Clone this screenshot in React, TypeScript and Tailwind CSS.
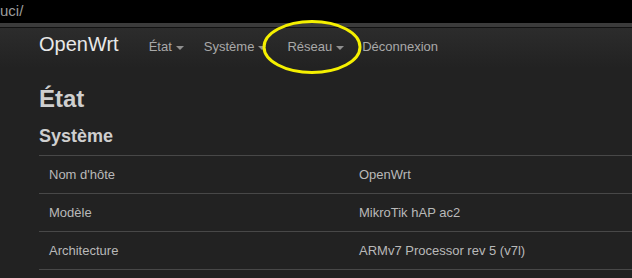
const rows = [
  ['Nom d\'hôte', 'OpenWrt'],
  ['Modèle', 'MikroTik hAP ac2'],
  ['Architecture', 'ARMv7 Processor rev 5 (v7l)'],
]

function Caret() {
  return (
    <span className="ml-[4px] inline-block h-0 w-0 border-x-[4px] border-t-[4px] border-x-transparent border-t-[#8f8f8f] align-middle" />
  )
}

export default function App() {
  return (
    <div className="relative h-[278px] w-[632px] overflow-hidden bg-[#222] font-['Liberation_Sans',Arial,sans-serif]">
      {/* address bar remnant */}
      <div className="h-[23px] bg-black pl-0 text-[15px] leading-[21px] text-[#9c9c9c]">uci/</div>
      <div className="h-[4px] bg-[#3b3b3b]" />
      <div className="h-px bg-[#111]" />

      <nav className="h-[40px] bg-gradient-to-b from-[#2c2c2c] to-[#222] pl-[39px] pt-[6px]">
        <div className="flex items-baseline whitespace-nowrap">
          <span className="text-[20px] leading-[20px] text-[#e8e8e8]">OpenWrt</span>
          <span className="ml-[30px] text-[13px] leading-[20px] text-[#a9a9a9]">
            État<Caret />
          </span>
          <span className="ml-[20px] text-[13px] leading-[20px] text-[#a9a9a9]">
            Système<Caret />
          </span>
          <span className="ml-[21px] text-[13px] leading-[20px] text-[#a9a9a9]">
            Réseau<Caret />
          </span>
          <span className="ml-[18px] text-[13px] leading-[20px] text-[#a9a9a9]">Déconnexion</span>
        </div>
      </nav>

      <main className="w-[800px] pl-[39px]">
        <h1 className="mt-[18px] text-[24px] font-bold leading-[26px] text-[#cfcfcf]">État</h1>
        <h3 className="mt-[14px] text-[18px] font-bold leading-[20px] text-[#cfcfcf]">Système</h3>
        <table className="mt-[9px] w-full border-collapse text-[13px] text-[#b9b9b9]">
          <tbody>
            {rows.map(([k, v]) => (
              <tr key={k} className="h-[38px] border-y border-[#484848]">
                <td className="w-[320px] pl-[10px]">{k}</td>
                <td>{v}</td>
              </tr>
            ))}
          </tbody>
        </table>
      </main>

      {/* highlight annotation */}
      <svg className="absolute left-[260px] top-[18px]" width="104" height="58" viewBox="0 0 104 58">
        <ellipse cx="52" cy="29" rx="48" ry="25.5" fill="none" stroke="#f5f000" strokeWidth="3" />
      </svg>
    </div>
  )
}
